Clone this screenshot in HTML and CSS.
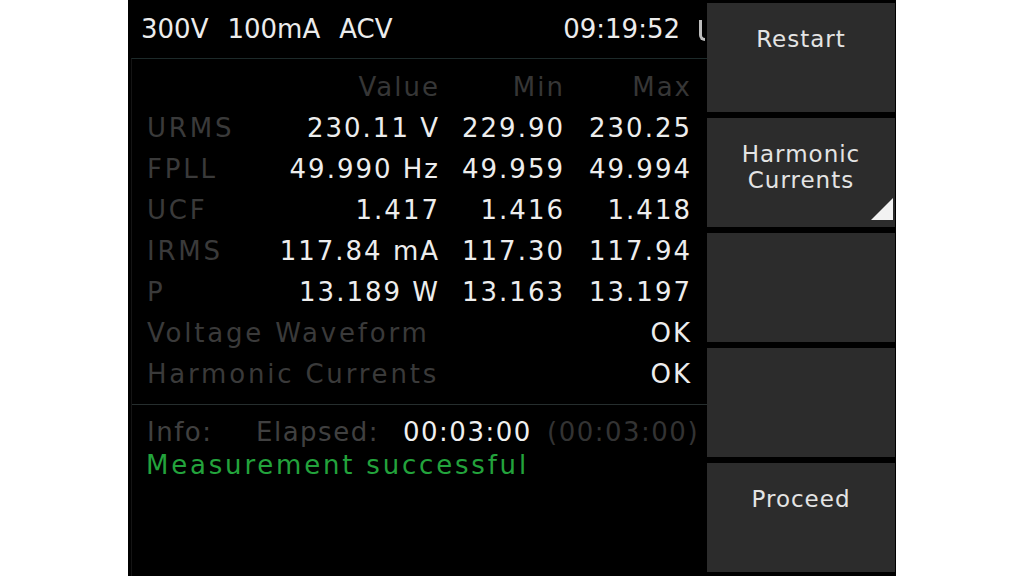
FILE: index.html
```html
<!DOCTYPE html>
<html lang="en">
<head>
    <meta charset="UTF-8">
    <meta name="viewport" content="width=device-width, initial-scale=1.0">
    <title>Measurement Result</title>
    <link rel="stylesheet" href="styles.css">
</head>
<body>
    <div class="screen">
        <div class="panel">
            <div class="topbar">
                <span>300V</span>
                <span>100mA</span>
                <span>ACV</span>
                <span class="clock">09:19:52</span>
                <span class="cut"></span>
            </div>
            <div class="main">
                <div class="table">
                    <div class="head"></div>
                    <div class="head num">Value</div>
                    <div class="head num">Min</div>
                    <div class="head num">Max</div>

                    <div class="label">URMS</div>
                    <div class="num">230.11 V</div>
                    <div class="num">229.90</div>
                    <div class="num">230.25</div>

                    <div class="label">FPLL</div>
                    <div class="num">49.990 Hz</div>
                    <div class="num">49.959</div>
                    <div class="num">49.994</div>

                    <div class="label">UCF</div>
                    <div class="num">1.417</div>
                    <div class="num">1.416</div>
                    <div class="num">1.418</div>

                    <div class="label">IRMS</div>
                    <div class="num">117.84 mA</div>
                    <div class="num">117.30</div>
                    <div class="num">117.94</div>

                    <div class="label">P</div>
                    <div class="num">13.189 W</div>
                    <div class="num">13.163</div>
                    <div class="num">13.197</div>

                    <div class="label wide">Voltage Waveform</div>
                    <div class="num">OK</div>

                    <div class="label wide">Harmonic Currents</div>
                    <div class="num">OK</div>
                </div>
                <div class="info">
                    <div class="info-row">
                        <span class="info-label">Info:</span>
                        <span class="elapsed-label">Elapsed:</span>
                        <span class="elapsed">00:03:00</span>
                        <span class="limit">(00:03:00)</span>
                    </div>
                    <div class="status">Measurement successful</div>
                </div>
            </div>
        </div>
        <div class="softkeys">
            <div class="softkey">Restart</div>
            <div class="softkey">Harmonic<br>Currents
                <svg class="corner" width="22" height="22" viewBox="0 0 22 22">
                    <polygon points="22,0 22,22 0,22" fill="#f2f2f2"/>
                </svg>
            </div>
            <div class="softkey"></div>
            <div class="softkey"></div>
            <div class="softkey">Proceed</div>
        </div>
    </div>
</body>
</html>
```

FILE: styles.css
```css
body {
    margin: 0;
    padding: 0;
    background-color: #fff;
    font-family: "DejaVu Sans", sans-serif;
}
.screen {
    width: 768px;
    height: 576px;
    margin-left: 128px;
    background-color: #000;
    display: flex;
}
.panel {
    width: 579px;
    overflow: hidden;
    display: flex;
    flex-direction: column;
}
.topbar {
    height: 58px;
    flex: none;
    display: flex;
    align-items: center;
    gap: 19px;
    padding-left: 13px;
    color: #ececec;
    font-size: 26px;
    white-space: nowrap;
}
.clock {
    margin-left: auto;
}
.cut {
    width: 6px;
    height: 21px;
    margin-left: 0;
    margin-right: 2px;
    box-sizing: border-box;
    border-left: 3px solid #bdbdbd;
    border-bottom: 3px solid #bdbdbd;
    border-bottom-left-radius: 6px;
    margin-top: 2px;
}
.main {
    flex: 1;
    margin-left: 3px;
    border-top: 1px solid #1d2a2a;
    border-left: 1px solid #141414;
}
.table {
    display: grid;
    grid-template-columns: 1fr 170px 125px 127px;
    grid-auto-rows: 41px;
    align-items: center;
    padding: 7px 17px 10px 15px;
    font-size: 26px;
    letter-spacing: 2px;
}
.head {
    color: #363636;
}
.label {
    color: #3a3a3a;
    letter-spacing: 2.8px;
}
.label.wide {
    grid-column: 1 / 4;
}
.num {
    text-align: right;
    margin-right: -2px;
    color: #ededed;
    white-space: nowrap;
}
.head.num {
    color: #363636;
}
.info {
    border-top: 1px solid #262e2e;
    padding: 11px 0 0 14px;
    font-size: 26px;
    line-height: 33px;
    letter-spacing: 1.5px;
}
.info-row {
    display: flex;
    white-space: nowrap;
    padding-left: 1px;
}
.info-label {
    width: 109px;
    color: #404040;
}
.elapsed-label {
    width: 147px;
    color: #404040;
}
.elapsed {
    width: 144px;
    color: #f0f0f0;
}
.limit {
    color: #333;
}
.status {
    color: #23a33c;
    letter-spacing: 2.8px;
    white-space: nowrap;
}
.softkeys {
    width: 188px;
    display: flex;
    flex-direction: column;
    gap: 5.5px;
    padding: 3px 0 4px;
    box-sizing: border-box;
}
.softkey {
    flex: 1;
    position: relative;
    background-color: #2c2c2c;
    color: #e4e4e4;
    text-align: center;
    padding-top: 23px;
    font-size: 23px;
    line-height: 26px;
    letter-spacing: 1px;
}
.corner {
    position: absolute;
    right: 2px;
    bottom: 7px;
}
```
